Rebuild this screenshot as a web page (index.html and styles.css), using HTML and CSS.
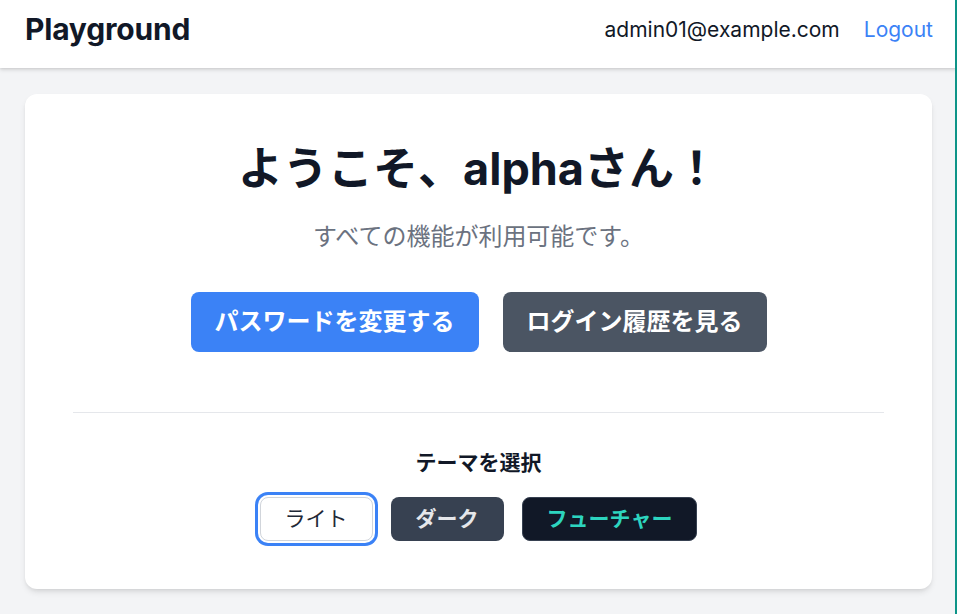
FILE: index.html
```html
<!DOCTYPE html>
<html lang="ja">
<head>
<meta charset="utf-8">
<title>Playground</title>
<link rel="stylesheet" href="styles.css">
</head>
<body>
<header class="topbar">
  <div class="brand">Playground</div>
  <nav class="user">
    <span class="email">admin01@example.com</span>
    <a class="logout" href="#">Logout</a>
  </nav>
</header>
<main class="main">
  <section class="card">
    <h1 class="title">ようこそ、alphaさん！</h1>
    <p class="subtitle">すべての機能が利用可能です。</p>
    <div class="actions">
      <button class="btn btn-primary">パスワードを変更する</button>
      <button class="btn btn-secondary">ログイン履歴を見る</button>
    </div>
    <hr class="divider">
    <h2 class="theme-title">テーマを選択</h2>
    <div class="themes">
      <button class="theme theme-light active">ライト</button>
      <button class="theme theme-dark">ダーク</button>
      <button class="theme theme-future">フューチャー</button>
    </div>
  </section>
</main>
<div class="edge"></div>
</body>
</html>
```
FILE: styles.css
```css
* { box-sizing: border-box; }
html, body { margin: 0; padding: 0; }
body {
  background: #f3f4f6;
  font-family: "Inter", "Noto Sans CJK JP", sans-serif;
  color: #111827;
  height: 614px;
  overflow: hidden;
}
.topbar {
  height: 68px;
  background: #fff;
  display: flex;
  align-items: center;
  justify-content: space-between;
  padding: 0 24px 10px 25px;
  box-shadow: 0 2px 4px rgba(0,0,0,0.12), 0 1px 2px rgba(0,0,0,0.06);
  position: relative;
  z-index: 1;
}
.brand {
  font-size: 30px;
  font-weight: 700;
  color: #111827;
  letter-spacing: -0.2px;
}
.user {
  display: flex;
  align-items: center;
  gap: 24px;
  font-size: 21px;
}
.email { color: #111827; }
.logout { color: #3b82f6; text-decoration: none; }
.main {
  padding: 26px 25px 0;
}
.card {
  background: #fff;
  border-radius: 12px;
  box-shadow: 0 4px 6px -1px rgba(0,0,0,0.1), 0 2px 4px -2px rgba(0,0,0,0.1);
  padding: 48px 48px 48px;
  display: flex;
  flex-direction: column;
  align-items: center;
}
.title {
  margin: 0;
  font-size: 45px;
  line-height: 53px;
  font-weight: 700;
  color: #111827;
}
.subtitle {
  margin: 24px 0 0;
  font-size: 24px;
  line-height: 36px;
  color: #6b7280;
}
.actions {
  margin-top: 37px;
  display: flex;
  gap: 24px;
}
.btn {
  font-family: inherit;
  font-size: 24px;
  line-height: 28px;
  font-weight: 700;
  color: #fff;
  border: none;
  border-radius: 8px;
  padding: 16px 24px;
}
.btn-primary { background: #3b82f6; }
.btn-secondary { background: #4b5563; }
.divider {
  align-self: stretch;
  margin: 60px 0 0;
  border: none;
  border-top: 1px solid #e5e7eb;
}
.theme-title {
  margin: 36px 0 0;
  font-size: 21px;
  line-height: 28px;
  font-weight: 700;
  color: #111827;
}
.themes {
  margin-top: 20px;
  display: flex;
  gap: 18px;
}
.theme {
  font-family: inherit;
  font-size: 21px;
  line-height: 28px;
  padding: 7px 24px;
  border-radius: 8px;
  border: 1px solid transparent;
}
.theme-light {
  background: #fff;
  color: #1f2937;
  border-color: #d1d5db;
  font-weight: 400;
}
.theme-light.active {
  box-shadow: 0 0 0 2px #fff, 0 0 0 5px #3b82f6;
}
.theme-dark {
  background: #374151;
  color: #e5e7eb;
  font-weight: 700;
}
.theme-future {
  background: #111827;
  color: #2dd4bf;
  border-color: #374151;
  font-weight: 700;
}
.edge {
  position: fixed;
  top: 0;
  bottom: 0;
  right: 0;
  width: 2px;
  background: #0d9488;
  z-index: 5;
}
```
